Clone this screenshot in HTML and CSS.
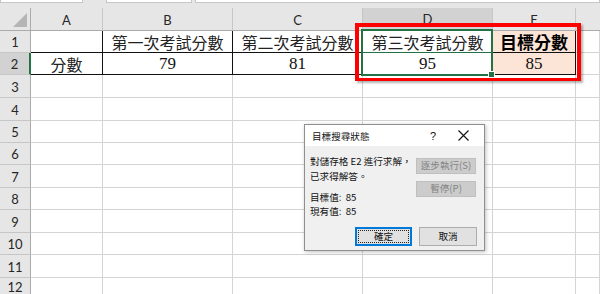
FILE: index.html
```html
<!DOCTYPE html>
<html>
<head>
<meta charset="utf-8">
<link rel="stylesheet" href="styles.css">
</head>
<body>
<div class="topbar"><div class="box b1"></div><div class="box b2"></div><div class="box b3"></div></div>
<div class="sheet">
  <div class="c h corner"><svg width="14" height="14" viewBox="0 0 14 14"><polygon points="14,0 14,14 0,14" fill="#b5b5b5"/></svg></div>
  <div class="c h ch">A</div><div class="c h ch">B</div><div class="c h ch">C</div><div class="c h ch sel">D</div><div class="c h ch">E</div><div class="c h ch last"></div>

  <div class="c h rh">1</div>
  <div class="c a1"></div><div class="c bx cj">第一次考試分數</div><div class="c bx cj">第二次考試分數</div><div class="c bx cj">第三次考試分數</div><div class="c bx cj bold peach">目標分數</div><div class="c"></div>

  <div class="c h rh rsel">2</div>
  <div class="c bx cj">分數</div><div class="c bx num">79</div><div class="c bx num">81</div><div class="c bx num">95</div><div class="c bx num peach">85</div><div class="c"></div>

  <div class="c h rh">3</div><div class="c"></div><div class="c"></div><div class="c"></div><div class="c"></div><div class="c"></div><div class="c"></div>
  <div class="c h rh">4</div><div class="c"></div><div class="c"></div><div class="c"></div><div class="c"></div><div class="c"></div><div class="c"></div>
  <div class="c h rh">5</div><div class="c"></div><div class="c"></div><div class="c"></div><div class="c"></div><div class="c"></div><div class="c"></div>
  <div class="c h rh">6</div><div class="c"></div><div class="c"></div><div class="c"></div><div class="c"></div><div class="c"></div><div class="c"></div>
  <div class="c h rh">7</div><div class="c"></div><div class="c"></div><div class="c"></div><div class="c"></div><div class="c"></div><div class="c"></div>
  <div class="c h rh">8</div><div class="c"></div><div class="c"></div><div class="c"></div><div class="c"></div><div class="c"></div><div class="c"></div>
  <div class="c h rh">9</div><div class="c"></div><div class="c"></div><div class="c"></div><div class="c"></div><div class="c"></div><div class="c"></div>
  <div class="c h rh">10</div><div class="c"></div><div class="c"></div><div class="c"></div><div class="c"></div><div class="c"></div><div class="c"></div>
  <div class="c h rh">11</div><div class="c"></div><div class="c"></div><div class="c"></div><div class="c"></div><div class="c"></div><div class="c"></div>
  <div class="c h rh r12">12</div><div class="c"></div><div class="c"></div><div class="c"></div><div class="c"></div><div class="c"></div><div class="c"></div>
</div>

<div class="selection"><div class="mid"></div><div class="handle"></div></div>
<div class="redbox"></div>

<div class="dialog">
  <div class="dlg-title">
    <span class="dlg-name">目標搜尋狀態</span>
    <span class="dlg-help">?</span>
    <span class="dlg-close"><svg width="11" height="11" viewBox="0 0 11 11"><path d="M0.5 0.5 L10.5 10.5 M10.5 0.5 L0.5 10.5" stroke="#111" stroke-width="1.1" fill="none"/></svg></span>
  </div>
  <div class="dlg-body">
    <div class="dlg-main">
      <div class="dlg-text">
        <div class="ln">對儲存格 E2 進行求解，</div>
        <div class="ln">已求得解答。</div>
        <div class="ln2 gap">目標值:&nbsp; 85</div>
        <div class="ln2">現有值:&nbsp; 85</div>
      </div>
      <div class="dlg-side">
        <div class="btn dis">逐步執行(S)</div>
        <div class="btn dis">暫停(P)</div>
      </div>
    </div>
    <div class="dlg-foot">
      <div class="btn big primary"><span class="focus">確定</span></div>
      <div class="btn big">取消</div>
    </div>
  </div>
</div>
</body>
</html>
```
FILE: styles.css
```css
html, body { margin: 0; padding: 0; }
body {
  width: 600px; height: 294px; overflow: hidden; position: relative;
  background: #fff;
  font-family: "Lato", "Liberation Sans", sans-serif;
}
.topbar { height: 8px; background: #e6e6e6; display: flex; box-sizing: border-box; }
.box { height: 2px; background: #fff; border: 1px solid #c6c6c6; border-top: none; }
.b1 { width: 81px; }
.b2 { width: 84px; margin-left: 23px; }
.b3 { flex: 1; margin-left: 3px; }

.sheet {
  display: grid;
  grid-template-columns: 31px 72px 130px 130px 130px 83px 1fr;
  grid-template-rows: 23px 22px 22px 23px 23px 22px 22px 23px 22px 23px 22px 23px 23px;
}
.c {
  box-sizing: border-box;
  border-right: 1px solid #d4d4d4;
  border-bottom: 1px solid #d4d4d4;
  display: flex; align-items: center; justify-content: center;
  color: #1a1a1a;
}
.h { background: #e6e6e6; color: #262626; font-size: 13px; }
.corner { border-right: 1px solid #ababab; border-bottom: 1px solid #ababab; align-items: flex-end; justify-content: flex-end; padding: 0 3px 3px 0; }
.ch { border-right: 1px solid #c6c6c6; border-bottom: 1px solid #ababab; padding-top: 1px; }
.ch.last { border-right: none; }
.ch.sel { background: #d2d2d2; border-bottom: 2px solid #217346; }
.rh { border-right: 1px solid #ababab; border-bottom: 1px solid #c6c6c6; padding-top: 1px; }
.rh.rsel { background: #d2d2d2; border-right: 2px solid #217346; }
.rh.r12 { align-items: flex-start; padding-top: 2px; line-height: 14px; }
.a1 { border-right-color: #111; border-bottom-color: #111; }
.bx { border-right-color: #111; border-bottom-color: #111; }
.cj { font-family: "Noto Sans CJK TC", sans-serif; font-size: 16px; font-weight: 400; color: #222; }
.bold { font-weight: 700; font-size: 17px; color: #000; }
.num { font-family: "Liberation Serif", serif; font-size: 17px; color: #111; padding-top: 1px; }
.peach { background: #fce4d6; }

.selection {
  position: absolute; left: 361px; top: 29px; width: 132px; height: 47px;
  box-sizing: border-box; border: 2px solid #217346;
}
.selection .mid { position: absolute; left: 0; right: 0; top: 21px; height: 1px; background: #217346; }
.selection .handle {
  position: absolute; right: -4px; bottom: -4px; width: 5px; height: 5px;
  background: #217346; border: 1px solid #fff;
}
.redbox {
  position: absolute; left: 355px; top: 23px; width: 226px; height: 58px;
  box-sizing: border-box; border: 4px solid #f00; border-bottom-width: 3px;
  box-shadow: 2px 2px 2px rgba(0,0,0,0.3);
}

.dialog {
  position: absolute; left: 304px; top: 124px; width: 181px; height: 127px;
  box-sizing: border-box; border: 1px solid #8f8f8f;
  background: #f0f0f0;
  box-shadow: 1px 1px 4px rgba(0,0,0,0.25);
  font-family: "Noto Sans CJK TC", sans-serif; color: #111;
  display: flex; flex-direction: column;
}
.dlg-title { height: 21px; background: #fff; display: flex; align-items: center; font-size: 9.6px; }
.dlg-name { padding-left: 7px; }
.dlg-help { margin-left: auto; width: 20px; text-align: center; font-family: "Liberation Sans", sans-serif; font-size: 11px; }
.dlg-close { width: 26px; margin-left: 7px; margin-right: 8px; display: flex; justify-content: center; }
.dlg-body { flex: 1; display: flex; flex-direction: column; padding: 8px 7px 0 5px; font-size: 9.6px; }
.dlg-main { display: flex; justify-content: space-between; }
.ln { line-height: 15px; }
.ln2 { line-height: 14px; }
.gap { margin-top: 6px; }
.dlg-side { display: flex; flex-direction: column; gap: 7px; padding-top: 4px; margin-right: 1px; }
.btn {
  box-sizing: border-box; width: 60px; height: 16px;
  border: 1px solid #adadad; background: #e1e1e1;
  display: flex; align-items: center; justify-content: center;
  font-size: 9.6px; line-height: 1;
}
.btn.dis { background: #cccccc; border-color: #bfbfbf; color: #838383; }
.dlg-foot { display: flex; justify-content: flex-end; gap: 7px; margin-top: 9px; }
.btn.big { width: 58px; height: 19px; }
.btn.primary { width: 57px; border: 1px solid #0078d7; box-shadow: inset 0 0 0 1px #0078d7; }
.focus { display: flex; align-items: center; justify-content: center; width: 49px; height: 11px; border: 1px dotted #222; }
```
